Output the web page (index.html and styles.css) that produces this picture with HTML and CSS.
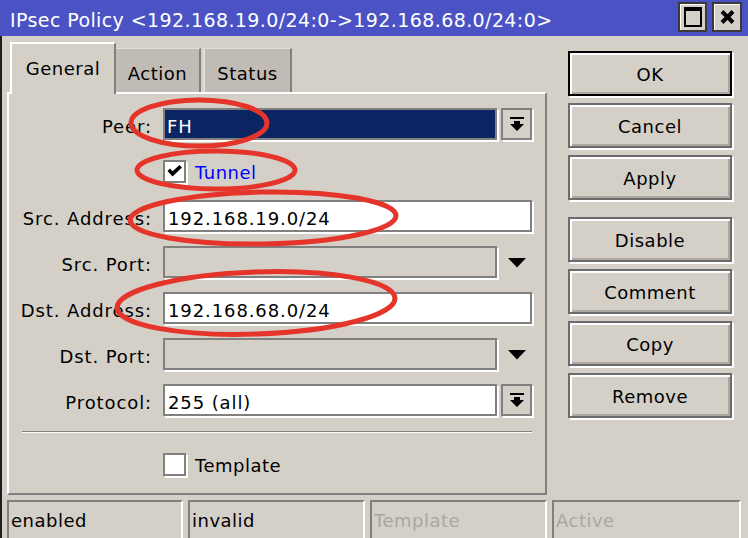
FILE: index.html
```html
<!DOCTYPE html>
<html lang="en">
<head>
    <meta charset="UTF-8">
    <title>IPsec Policy</title>
    <link rel="stylesheet" href="styles.css">
</head>
<body>
    <div class="window">
        <div class="titlebar">
            <span class="title">IPsec Policy &lt;192.168.19.0/24:0-&gt;192.168.68.0/24:0&gt;</span>
            <div class="tbtn">
                <svg width="18" height="20" viewBox="0 0 18 20"><rect x="1" y="1" width="16" height="18" fill="none" stroke="#000" stroke-width="2"/><rect x="0" y="0" width="18" height="4" fill="#000"/></svg>
            </div>
            <div class="tbtn close">
                <svg width="15" height="14" viewBox="0 0 15 14"><path d="M2 1.5L13 12.5M13 1.5L2 12.5" stroke="#000" stroke-width="4"/></svg>
            </div>
        </div>
        <div class="body">
            <div class="main">
                <div class="left">
                    <div class="tabs">
                        <div class="tab active general">General</div>
                        <div class="tab action">Action</div>
                        <div class="tab status">Status</div>
                    </div>
                    <div class="panel">
                        <div class="row">
                            <div class="label">Peer:</div>
                            <div class="ctl">
                                <div class="field sel">FH</div>
                                <div class="dd">
                                    <svg width="14" height="15" viewBox="0 0 14 15"><rect x="0" y="0" width="14" height="2"/><path d="M4 4H10V7H14L7 14L0 7H4Z"/></svg>
                                </div>
                            </div>
                        </div>
                        <div class="row check">
                            <div class="label"></div>
                            <div class="ctl">
                                <div class="cb">
                                    <svg width="15" height="13" viewBox="0 0 15 13"><polygon points="0.5,6 3,3.5 5.5,6.2 12.5,0 15,2.5 5.5,11.5"/></svg>
                                </div>
                                <span class="cbtext blue">Tunnel</span>
                            </div>
                        </div>
                        <div class="row">
                            <div class="label">Src. Address:</div>
                            <div class="ctl"><div class="field">192.168.19.0/24</div></div>
                        </div>
                        <div class="row">
                            <div class="label">Src. Port:</div>
                            <div class="ctl">
                                <div class="field off"></div>
                                <div class="arrow"><svg width="18" height="10" viewBox="0 0 18 10"><path d="M0 0H18L9 9.5Z"/></svg></div>
                            </div>
                        </div>
                        <div class="row">
                            <div class="label">Dst. Address:</div>
                            <div class="ctl"><div class="field">192.168.68.0/24</div></div>
                        </div>
                        <div class="row">
                            <div class="label">Dst. Port:</div>
                            <div class="ctl">
                                <div class="field off"></div>
                                <div class="arrow"><svg width="18" height="10" viewBox="0 0 18 10"><path d="M0 0H18L9 9.5Z"/></svg></div>
                            </div>
                        </div>
                        <div class="row">
                            <div class="label">Protocol:</div>
                            <div class="ctl">
                                <div class="field">255 (all)</div>
                                <div class="dd">
                                    <svg width="14" height="15" viewBox="0 0 14 15"><rect x="0" y="0" width="14" height="2"/><path d="M4 4H10V7H14L7 14L0 7H4Z"/></svg>
                                </div>
                            </div>
                        </div>
                        <div class="sep"></div>
                        <div class="row check template">
                            <div class="label"></div>
                            <div class="ctl">
                                <div class="cb"></div>
                                <span class="cbtext">Template</span>
                            </div>
                        </div>
                    </div>
                </div>
                <div class="buttons">
                    <div class="btn default">OK</div>
                    <div class="btn">Cancel</div>
                    <div class="btn">Apply</div>
                    <div class="btn group">Disable</div>
                    <div class="btn">Comment</div>
                    <div class="btn">Copy</div>
                    <div class="btn">Remove</div>
                </div>
            </div>
            <div class="statusbar">
                <div class="cell c1">enabled</div>
                <div class="cell c2">invalid</div>
                <div class="cell c3 off">Template</div>
                <div class="cell c4 off">Active</div>
            </div>
        </div>
        <!-- red marker rings drawn over the dialog -->
        <svg class="marks" width="748" height="538" viewBox="0 0 748 538">
            <ellipse cx="199" cy="123" rx="68" ry="23"/>
            <ellipse cx="216" cy="170" rx="79" ry="19"/>
            <ellipse cx="263" cy="218" rx="133" ry="26" transform="rotate(-1 263 218)"/>
            <ellipse cx="256" cy="303" rx="139" ry="31" transform="rotate(-2 256 303)"/>
        </svg>
    </div>
</body>
</html>
```

FILE: styles.css
```css
body{
    margin: 0;
    font-family: "DejaVu Sans", "Liberation Sans", sans-serif;
    font-size: 18px;
    letter-spacing: 0.5px;
    color: #000;
}
.window{
    position: relative;
    width: 748px;
    height: 538px;
    overflow: hidden;
    background: #d4d0c8;
    display: flex;
    flex-direction: column;
}
.titlebar{
    flex: none;
    height: 36px;
    box-sizing: border-box;
    padding: 2px 6px 0 10px;
    background: #4b53c4;
    color: #fff;
    display: flex;
    align-items: flex-start;
}
.title{
    flex: 1;
    font-size: 19px;
    line-height: 22px;
    letter-spacing: 0.4px;
    padding-top: 7px;
    white-space: nowrap;
}
.tbtn{
    width: 29px;
    height: 30px;
    box-sizing: border-box;
    margin-left: 5px;
    border: 2px solid #3a3a3a;
    background: #d4d0c8;
    box-shadow: inset 1px 1px 0 #fff;
    display: flex;
    align-items: center;
    justify-content: center;
}
.tbtn.close{
    width: 30px;
}
.body{
    flex: 1;
    display: flex;
    flex-direction: column;
    border-left: 2px solid #1e1e1e;
}
.main{
    display: flex;
    height: 463px;
}
.left{
    width: 540px;
    margin-left: 5px;
    padding-top: 6px;
}
.tabs{
    display: flex;
    align-items: flex-end;
    height: 50px;
    padding-left: 3px;
}
.tab{
    box-sizing: border-box;
    height: 44px;
    padding-top: 13px;
    line-height: 24px;
    text-align: center;
    background: #c0bcb5;
    border-top: 1px solid #e2dfd9;
    border-left: 2px solid #e2dfd9;
    border-right: 2px solid #808080;
}
.tab.active{
    position: relative;
    z-index: 1;
    height: 52px;
    margin-bottom: -2px;
    background: #d4d0c8;
    border-top: 2px solid #fff;
    border-left: 2px solid #fff;
}
.tab.general{ width: 106px; }
.tab.action{ width: 85px; border-left: none; }
.tab.status{ width: 89px; margin-left: 2px; }

.panel{
    box-sizing: border-box;
    height: 403px;
    border: 2px solid;
    border-color: #fff #808080 #808080 #fff;
    padding: 14px 13px 0 0;
    display: flex;
    flex-direction: column;
    gap: 12px;
}
.row{
    flex: none;
    display: flex;
    height: 34px;
}
.label{
    flex: none;
    width: 143px;
    height: 32px;
    box-sizing: border-box;
    padding-top: 5px;
    line-height: 27px;
    letter-spacing: 0.9px;
    text-align: right;
    white-space: nowrap;
}
.ctl{
    flex: 1;
    margin-left: 11px;
    display: flex;
    gap: 4px;
}
.field{
    flex: 1;
    height: 32px;
    box-sizing: border-box;
    border: 2px solid #808080;
    box-shadow: 2px 2px 0 #fff;
    background: #fff;
    padding: 5px 4px 0 3px;
    line-height: 23px;
    letter-spacing: 0.9px;
    white-space: nowrap;
    overflow: hidden;
}
.field.sel{
    background: #0b2462;
    color: #fff;
    padding-left: 2px;
}
.field.off{
    background: #d4d0c8;
}
.dd{
    flex: none;
    width: 31px;
    height: 32px;
    box-sizing: border-box;
    border: 2px solid #808080;
    box-shadow: 2px 2px 0 #fff;
    display: flex;
    align-items: center;
    justify-content: center;
}
.arrow{
    flex: none;
    width: 31px;
    display: flex;
    align-items: center;
    justify-content: center;
}
.row.check .ctl{
    align-items: center;
    gap: 9px;
}
.cb{
    flex: none;
    width: 23px;
    height: 23px;
    box-sizing: border-box;
    border: 2px solid #808080;
    box-shadow: 2px 2px 0 #fff;
    background: #fff;
    display: flex;
    align-items: center;
    justify-content: center;
}
.cbtext{
    line-height: 23px;
    padding-top: 2px;
}
.blue{
    color: #0000ff;
}
.sep{
    flex: none;
    height: 2px;
    box-sizing: border-box;
    margin: 1px 0 0 13px;
    border-top: 1px solid #808080;
    border-bottom: 1px solid #fff;
}
.row.template{
    margin-top: 2px;
}

.buttons{
    width: 164px;
    margin-left: 21px;
    padding-top: 15px;
    display: flex;
    flex-direction: column;
    gap: 7px;
}
.btn{
    height: 45px;
    box-sizing: border-box;
    border: 2px solid #6b6b6b;
    box-shadow: inset 2px 2px 0 #fff, inset -2px -2px 0 #aca89f, 2px 2px 0 #fff;
    padding-top: 3px;
    line-height: 38px;
    text-align: center;
}
.btn.default{
    border-color: #000;
}
.btn.group{
    margin-top: 10px;
}

.statusbar{
    display: flex;
    gap: 5px;
    height: 39px;
    box-sizing: border-box;
    padding: 1px 0 0 5px;
}
.cell{
    flex: none;
    height: 40px;
    box-sizing: border-box;
    border: 2px solid;
    border-color: #808080 #fff #fff #808080;
    padding: 7px 0 0 2px;
    line-height: 23px;
    white-space: nowrap;
}
.cell.c1{ width: 176px; }
.cell.c2{ width: 177px; }
.cell.c3{ width: 177px; }
.cell.c4{ width: 189px; }
.cell.off{
    color: #aaa7a0;
}

.marks{
    position: absolute;
    left: 0;
    top: 0;
    pointer-events: none;
    fill: none;
    stroke: #e5352b;
    stroke-width: 5;
}
```
